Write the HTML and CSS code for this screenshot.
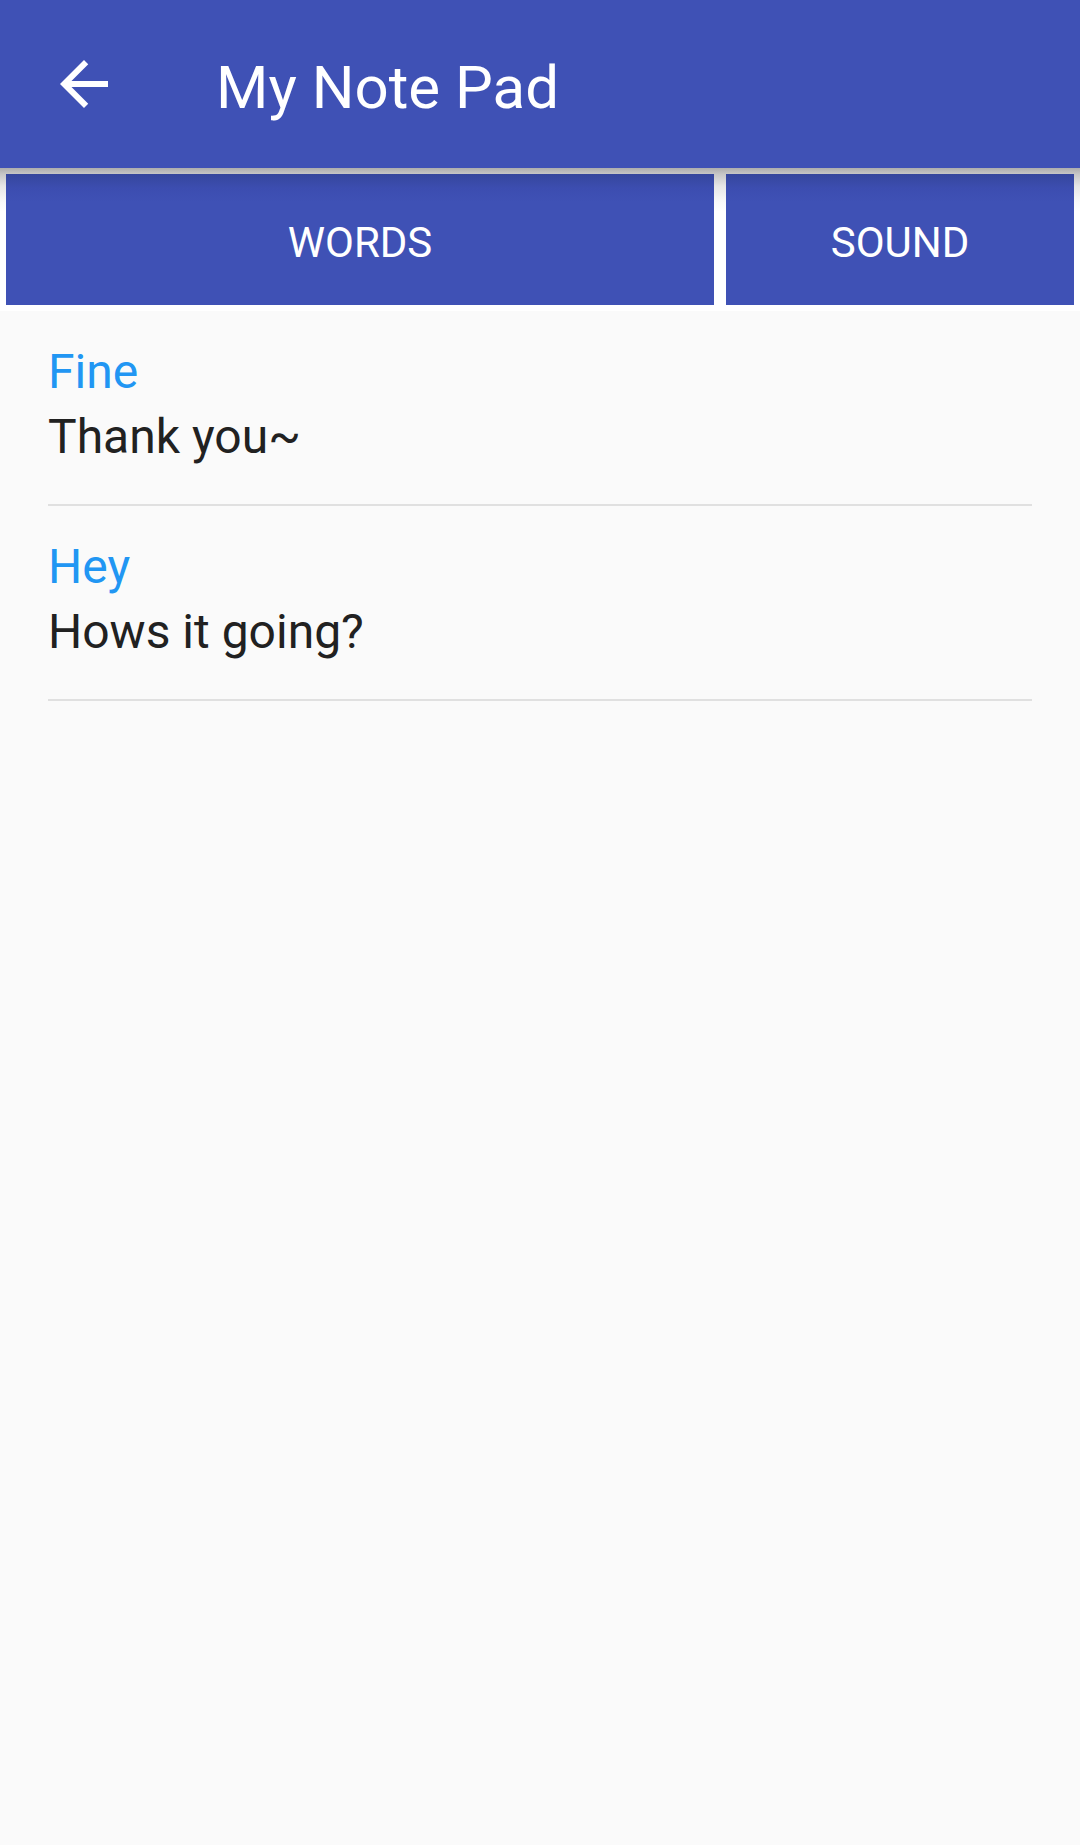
FILE: index.html
```html
<!DOCTYPE html>
<html>
<head>
<meta charset="utf-8">
<link rel="stylesheet" href="styles.css">
</head>
<body>
<div class="app">
  <header class="appbar">
    <div class="nav-icon">
      <svg width="72" height="72" viewBox="0 0 24 24"><path fill="#fff" d="M20 11H7.83l5.59-5.59L12 4l-8 8 8 8 1.41-1.41L7.83 13H20v-2z"/></svg>
    </div>
    <div class="title">My Note Pad</div>
  </header>
  <nav class="tabbar">
    <div class="tab tab-words">WORDS</div>
    <div class="tab tab-sound">SOUND</div>
  </nav>
  <ul class="notes">
    <li class="note">
      <div class="note-title">Fine</div>
      <div class="note-body">Thank you~</div>
    </li>
    <li class="note">
      <div class="note-title">Hey</div>
      <div class="note-body">Hows it going?</div>
    </li>
  </ul>
</div>
</body>
</html>
```
FILE: styles.css
```css
html, body {
  margin: 0;
  padding: 0;
  background: #fafafa;
}
body {
  font-family: Roboto, "Noto Sans", sans-serif;
  width: 1080px;
  height: 1845px;
  overflow: hidden;
}
.app {
  display: flex;
  flex-direction: column;
}
.appbar {
  height: 168px;
  background: #3f51b5;
  display: flex;
  align-items: center;
}
.nav-icon {
  width: 72px;
  height: 72px;
  margin-left: 48px;
  display: flex;
}
.title {
  margin-left: 96px;
  color: #fff;
  font-size: 60px;
  line-height: 72px;
  margin-top: 8px;
}
.tabbar {
  display: flex;
  gap: 12px;
  padding: 6px 6px 6px 6px;
  background: linear-gradient(#adadad 0, #c6c6c6 6px, #e6e6e6 18px, #f9f9f9 34px, #ffffff 44px);
}
.tab {
  height: 131px;
  box-sizing: border-box;
  padding-top: 5px;
  display: flex;
  align-items: center;
  justify-content: center;
  color: #fff;
  font-size: 42px;
  background: linear-gradient(#35469c 0, #3c4db0 14px, #3f51b5 28px);
}
.tab-words { width: 708px; }
.tab-sound { width: 348px; }
.notes {
  list-style: none;
  margin: 0;
  padding: 0;
}
.note {
  margin: 0 48px;
  padding: 28px 0 35px;
  border-bottom: 2px solid #e0e0e0;
}
.note-title {
  color: #2196f3;
  font-size: 48px;
  line-height: 65px;
}
.note-body {
  color: #212121;
  font-size: 48px;
  line-height: 65px;
}
```
